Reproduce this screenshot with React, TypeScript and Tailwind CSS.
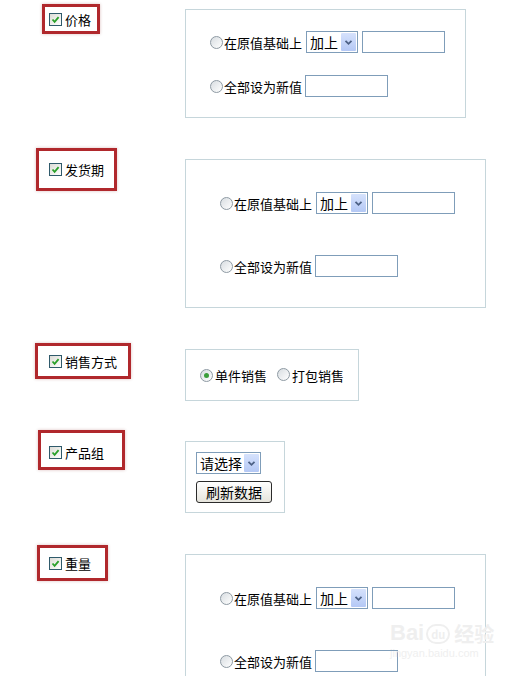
import React from 'react';

function CheckBox() {
  return (
    <span className="inline-flex w-[13px] h-[13px] shrink-0 items-center justify-center border border-[#2f5a6b] bg-linear-to-br from-[#dcdcd6] to-white">
      <svg width="9" height="9" viewBox="0 0 9 9">
        <path d="M1.5 4.5 L3.6 6.8 L7.6 2.2" fill="none" stroke="#2aa02a" strokeWidth="1.8" />
      </svg>
    </span>
  );
}

function Radio({ checked }: { checked?: boolean }) {
  return (
    <span className="inline-flex w-[13px] h-[13px] shrink-0 items-center justify-center rounded-full border border-[#8e9aa3] bg-linear-to-br from-[#d8dde1] to-white">
      {checked && <span className="w-[5px] h-[5px] rounded-full bg-[#3b9e3b]" />}
    </span>
  );
}

function Select({ value, className }: { value: string; className: string }) {
  return (
    <div className={`flex items-center h-[22px] border border-[#7f9db9] bg-white ${className}`}>
      <span className="pl-[3px] text-[14px] leading-none">{value}</span>
      <span className="ml-auto mr-[1px] flex h-[18px] w-[15px] items-center justify-center bg-linear-to-b from-[#d6e2fc] to-[#b4c8f5] rounded-[1px]">
        <svg width="9" height="7" viewBox="0 0 9 7">
          <path d="M1.5 1.8 L4.5 4.8 L7.5 1.8" fill="none" stroke="#4d6185" strokeWidth="1.8" />
        </svg>
      </span>
    </div>
  );
}

function TextBox() {
  return <input readOnly className="w-[83px] h-[22px] border border-[#7f9db9] bg-white outline-none" />;
}

function Label({ text, className }: { text: string; className: string }) {
  return (
    <div className={`flex items-center gap-[3px] border-[3px] border-[#b0282c] shadow-[0_0_3px_rgba(120,0,0,0.25)] ${className}`}>
      <CheckBox />
      <span className="leading-none">{text}</span>
    </div>
  );
}

function ChangeRows({ gap }: { gap: string }) {
  return (
    <div className={`flex flex-col ${gap}`}>
      <div className="flex items-center">
        <Radio />
        <span className="ml-[1px] leading-none">在原值基础上</span>
        <Select value="加上" className="ml-[4px] w-[52px]" />
        <div className="ml-[4px]">
          <TextBox />
        </div>
      </div>
      <div className="flex items-center">
        <Radio />
        <span className="ml-[1px] leading-none">全部设为新值</span>
        <div className="ml-[3px]">
          <TextBox />
        </div>
      </div>
    </div>
  );
}

export default function App() {
  return (
    <div className="relative w-[510px] h-[676px] overflow-hidden bg-white pt-[4px] text-[13px] text-black font-['Noto_Sans_CJK_SC',sans-serif]">
      {/* 价格 */}
      <div className="flex items-start">
        <div className="w-[185px] shrink-0">
          <Label text="价格" className="ml-[42px] w-[58px] h-[30px] pl-[4px]" />
        </div>
        <div className="mt-[5px] w-[281px] h-[109px] border border-[#c6d6db] pl-[24px] pt-[21px]">
          <ChangeRows gap="gap-[22px]" />
        </div>
      </div>

      {/* 发货期 */}
      <div className="mt-[30px] flex items-start">
        <div className="w-[185px] shrink-0">
          <Label text="发货期" className="ml-[36px] w-[81px] h-[43px] pl-[10px]" />
        </div>
        <div className="mt-[11px] w-[301px] h-[149px] border border-[#c6d6db] pl-[34px] pt-[32px]">
          <ChangeRows gap="gap-[41px]" />
        </div>
      </div>

      {/* 销售方式 */}
      <div className="mt-[35px] flex items-start">
        <div className="w-[185px] shrink-0">
          <Label text="销售方式" className="ml-[35px] w-[96px] h-[36px] pl-[11px]" />
        </div>
        <div className="mt-[6px] w-[174px] h-[52px] border border-[#c6d6db] pl-[14px] pt-[16px]">
          <div className="flex items-center">
            <Radio checked />
            <span className="ml-[2px] leading-none">单件销售</span>
            <span className="ml-[10px]">
              <Radio />
            </span>
            <span className="ml-[2px] leading-none">打包销售</span>
          </div>
        </div>
      </div>

      {/* 产品组 */}
      <div className="mt-[29px] flex items-start">
        <div className="w-[185px] shrink-0">
          <Label text="产品组" className="ml-[38px] w-[87px] h-[40px] pl-[8px] pt-[4px]" />
        </div>
        <div className="mt-[11px] w-[100px] h-[72px] border border-[#c6d6db] pl-[10px] pt-[10px]">
          <Select value="请选择" className="w-[65px] h-[21px]" />
          <button className="mt-[7px] flex h-[22px] w-[76px] items-center justify-center rounded-[3px] border border-[#2b2b2b] bg-linear-to-b from-white to-[#e6e4dc] text-[14px] leading-none">
            刷新数据
          </button>
        </div>
      </div>

      {/* 重量 */}
      <div className="mt-[32px] flex items-start">
        <div className="w-[185px] shrink-0">
          <Label text="重量" className="ml-[37px] w-[71px] h-[36px] pl-[9px]" />
        </div>
        <div className="mt-[9px] w-[301px] h-[160px] border border-[#c6d6db] pl-[34px] pt-[32px]">
          <ChangeRows gap="gap-[41px]" />
        </div>
      </div>

      {/* watermark */}
      <div className="absolute left-[390px] top-[622px] flex flex-col items-start text-[#efefef] pointer-events-none">
        <div className="flex items-end gap-[2px]">
          <span className="text-[22px] font-bold leading-none font-['Liberation_Sans',sans-serif]">Bai</span>
          <span className="flex h-[20px] w-[24px] items-center justify-center rounded-full border-2 border-[#efefef] text-[11px] font-bold leading-none">du</span>
          <span className="ml-[2px] text-[20px] font-bold leading-none">经验</span>
        </div>
        <span className="mt-[4px] text-[11px] leading-none font-['Liberation_Sans',sans-serif]">jingyan.baidu.com</span>
      </div>
    </div>
  );
}
